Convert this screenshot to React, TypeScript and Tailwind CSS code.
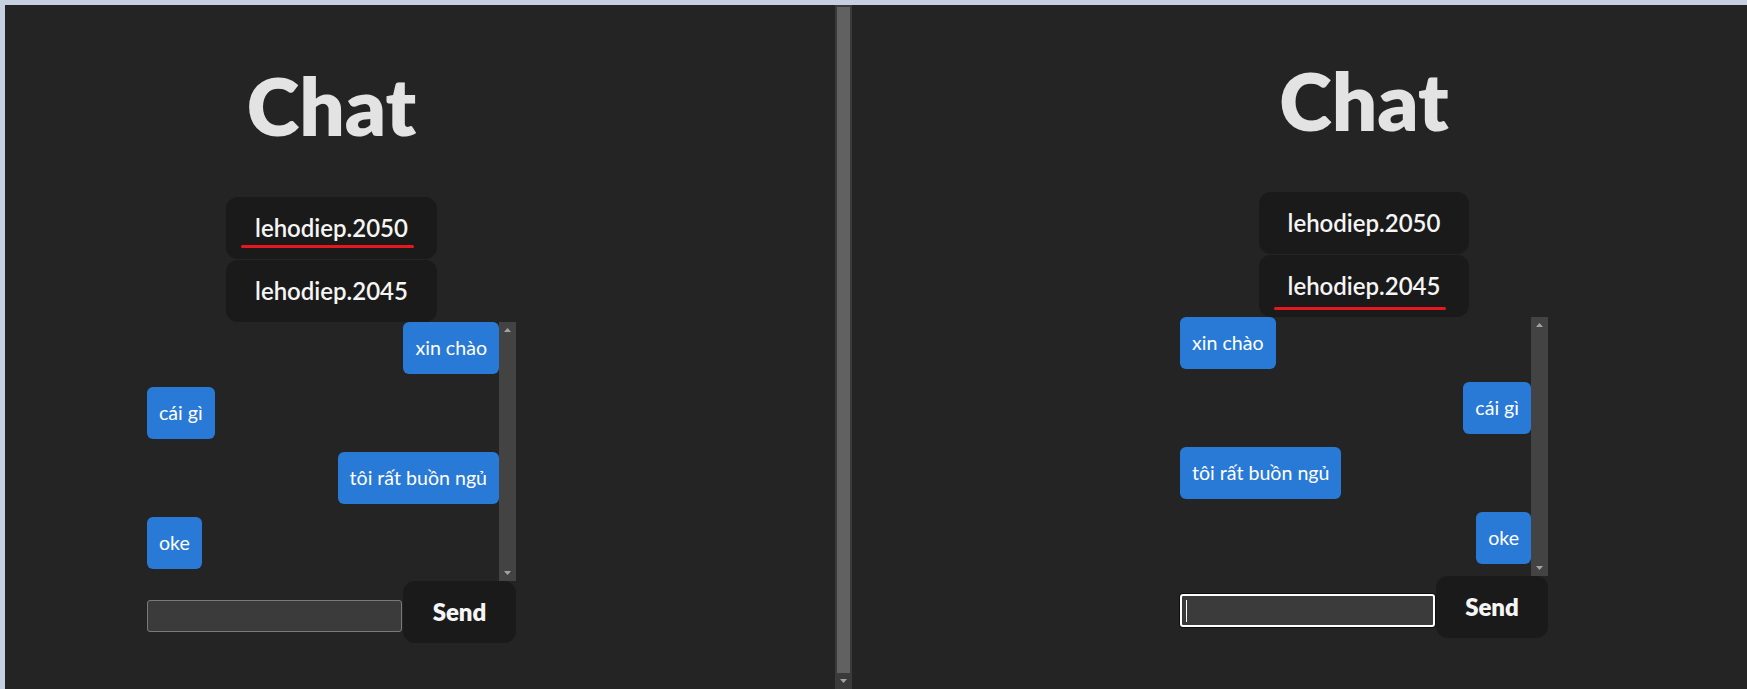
import React from 'react';

type Msg = { text: string; mine: boolean };

const users = ['lehodiep.2050', 'lehodiep.2045'];

const leftMessages: Msg[] = [
    { text: 'xin chào', mine: true },
    { text: 'cái gì', mine: false },
    { text: 'tôi rất buồn ngủ', mine: true },
    { text: 'oke', mine: false },
];

// the other window sees the same chat from the other side
const rightMessages: Msg[] = leftMessages.map((m) => ({ ...m, mine: !m.mine }));

const ArrowUp = () => (
    <svg width="7" height="4" viewBox="0 0 7 4">
        <path d="M0 4 L3.5 0 L7 4 Z" fill="#a3a3a3" />
    </svg>
);

const ArrowDown = () => (
    <svg width="7" height="4" viewBox="0 0 7 4">
        <path d="M0 0 L3.5 4 L7 0 Z" fill="#a3a3a3" />
    </svg>
);

interface IChatWindowProps {
    activeUser: number;
    messages: Msg[];
    focused?: boolean;
    offsetClass: string;
}

const ChatWindow: React.FC<IChatWindowProps> = ({ activeUser, messages, focused, offsetClass }) => {
    return (
        <div className={`flex flex-col ${offsetClass}`}>
            {/* Title */}
            <h1 className="h-[86px] text-center text-[80px] leading-[86px] font-extrabold text-[#e3e3e3]">Chat</h1>

            {/* Users */}
            <div className="mt-[49px] flex flex-col items-center gap-[1px]">
                {users.map((u, i) => (
                    <button
                        key={u}
                        className="relative h-[62px] rounded-[12px] bg-[#1a1a1a] px-[29px] text-[24px] font-semibold text-[#f5f5f5]"
                    >
                        {u}
                        {i === activeUser && (
                            <span
                                className={`absolute left-[15px] right-[23px] h-[3px] rounded-full bg-[#e8161f] ${i === 0 ? 'bottom-[11px]' : 'bottom-[7px]'}`}
                            />
                        )}
                    </button>
                ))}
            </div>

            {/* Messages */}
            <div className="flex h-[259px]">
                <div className="flex flex-1 flex-col gap-[13px] overflow-hidden">
                    {messages.map((m, i) => (
                        <div key={i} className={`flex ${m.mine ? 'justify-end' : 'justify-start'}`}>
                            <span className="rounded-[6px] bg-[#2979d6] px-[12px] py-[12px] text-[19.6px] leading-[28px] text-white">
                                {m.text}
                            </span>
                        </div>
                    ))}
                </div>
                <div className="flex w-[17px] flex-col items-center justify-between bg-[#434343] py-[6px]">
                    <ArrowUp />
                    <ArrowDown />
                </div>
            </div>

            {/* Input row */}
            <div className="flex h-[62px] items-start">
                {focused ? (
                    <div className="relative mt-[18px] h-[33px] w-[255px]">
                        <input
                            className="h-full w-full rounded-[3px] border-2 border-white bg-[#3b3b3b] shadow-[0_0_0_1px_#0e0e0e] outline-none"
                            readOnly
                        />
                        <span className="absolute left-[6px] top-[6px] h-[22px] w-[1px] bg-white" />
                    </div>
                ) : (
                    <input
                        className="mt-[19px] h-[32px] w-[255px] rounded-[3px] border border-[#7a7a7a] bg-[#3b3b3b] outline-none"
                        readOnly
                    />
                )}
                <button className="ml-[1px] h-[62px] flex-1 rounded-[12px] bg-[#1a1a1a] text-[24px] font-extrabold text-[#f5f5f5]">
                    Send
                </button>
            </div>
        </div>
    );
};

export default function App() {
    return (
        <div className="flex h-[689px] w-[1747px] overflow-hidden bg-[#c5d0e0] pl-[5px] pt-[5px] font-['Lato',sans-serif]">
            {/* Left window */}
            <div className="w-[830px] bg-[#242424]">
                <ChatWindow activeUser={0} messages={leftMessages} offsetClass="ml-[142px] w-[369px] pt-[57px]" />
            </div>

            {/* Left window scrollbar */}
            <div className="flex w-[17px] flex-col bg-[#3a3a3a] px-[2px] pt-[2px]">
                <div className="h-[666px] bg-[#616161]" />
                <div className="flex flex-1 items-center justify-center">
                    <ArrowDown />
                </div>
            </div>

            {/* Right window */}
            <div className="flex-1 bg-[#242424]">
                <ChatWindow activeUser={1} messages={rightMessages} focused offsetClass="ml-[328px] w-[368px] pt-[52px]" />
            </div>
        </div>
    );
}
